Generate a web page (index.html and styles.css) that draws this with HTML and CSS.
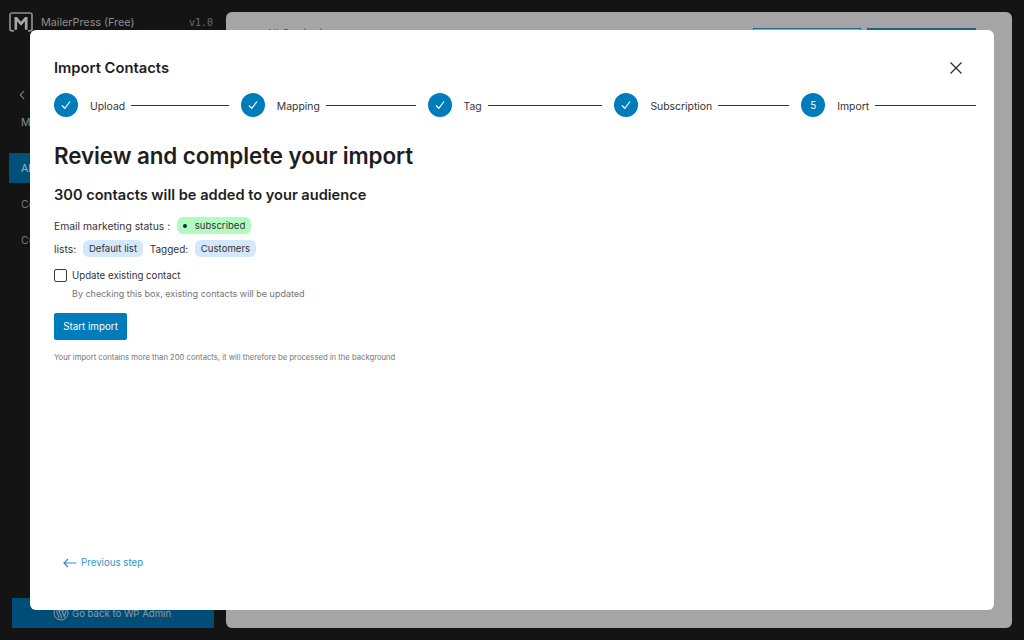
FILE: index.html
```html
<!DOCTYPE html>
<html lang="en">
<head>
<meta charset="utf-8">
<title>MailerPress - Import Contacts</title>
<link rel="stylesheet" href="styles.css">
</head>
<body>
<div class="app">
  <aside class="sidebar">
    <div class="brand">
      <svg class="brand-logo" viewBox="0 0 24 20" width="24" height="20" fill="none"><path d="M5 18.800H3a2 2 0 0 1-2-2V3a2 2 0 0 1 2-2h18a2 2 0 0 1 2 2v13.800a2 2 0 0 1-2 2h-2" stroke="#8f8f8f" stroke-width="1.700"/><path d="M5.500 17.800V5h2.500l4 4.800 4-4.800h2.500v12.800h-2.600V9.200L12 13.700 8.100 9.200v8.600z" fill="#a8a8a8"/></svg>
      <span class="brand-name">MailerPress (Free)</span>
      <span class="brand-version">v1.0</span>
    </div>
    <div class="back-row">
      <svg viewBox="0 0 10 14" width="8" height="12" fill="none"><path d="M7.500 2 3 7l4.500 5" stroke="#8a8a8a" stroke-width="1.400"/></svg>
    </div>
    <div class="side-label">Manage</div>
    <nav class="side-nav">
      <div class="side-item active">All contacts</div>
      <div class="side-item">Contacts</div>
      <div class="side-item">Custom</div>
    </nav>
    <div class="wp-link">
      <svg viewBox="0 0 24 24" width="16" height="16" fill="none"><circle cx="12" cy="12" r="10.500" stroke="#8f9aa3" stroke-width="1.500"/><path d="M5 8.500 9.500 20M9 8.500l4.500 11.500M13.500 8.500l4 10M20 8l-3.500 10M7 8.500h4.500M12.500 8.500H17" stroke="#8f9aa3" stroke-width="1.600"/></svg>
      <span>Go back to WP Admin</span>
    </div>
  </aside>
  <main class="content">
    <div class="content-bar">
      <div class="content-title">All Contacts</div>
      <div class="ghost-btn"></div>
      <div class="solid-btn"></div>
    </div>
  </main>
</div>

<section class="modal">
  <header class="modal-head">
    <h1 class="modal-title">Import Contacts</h1>
    <svg class="close" viewBox="0 0 14 14" width="14" height="14" fill="none"><path d="M1.500 1.500l11 11M12.500 1.500l-11 11" stroke="#2b2b2b" stroke-width="1.200"/></svg>
  </header>
  <ol class="steps">
    <li class="step"><span class="dot"><svg viewBox="0 0 12 12" width="12" height="12" fill="none"><path d="M2 6.500l2.800 2.800L10 2.500" stroke="#fff" stroke-width="1.200"/></svg></span><span class="step-label">Upload</span><span class="step-line"></span></li>
    <li class="step"><span class="dot"><svg viewBox="0 0 12 12" width="12" height="12" fill="none"><path d="M2 6.500l2.800 2.800L10 2.500" stroke="#fff" stroke-width="1.200"/></svg></span><span class="step-label">Mapping</span><span class="step-line"></span></li>
    <li class="step"><span class="dot"><svg viewBox="0 0 12 12" width="12" height="12" fill="none"><path d="M2 6.500l2.800 2.800L10 2.500" stroke="#fff" stroke-width="1.200"/></svg></span><span class="step-label">Tag</span><span class="step-line"></span></li>
    <li class="step"><span class="dot"><svg viewBox="0 0 12 12" width="12" height="12" fill="none"><path d="M2 6.500l2.800 2.800L10 2.500" stroke="#fff" stroke-width="1.200"/></svg></span><span class="step-label">Subscription</span><span class="step-line"></span></li>
    <li class="step"><span class="dot">5</span><span class="step-label">Import</span><span class="step-line"></span></li>
  </ol>
  <h2 class="review-title">Review and complete your import</h2>
  <h3 class="review-sub">300 contacts will be added to your audience</h3>
  <div class="meta-row status-row">
    <span>Email marketing status :</span>
    <span class="pill green"><i class="pill-dot"></i>subscribed</span>
  </div>
  <div class="meta-row lists-row">
    <span>lists:</span>
    <span class="pill blue">Default list</span>
    <span class="tagged">Tagged:</span>
    <span class="pill blue">Customers</span>
  </div>
  <label class="check-row">
    <input class="check" type="checkbox">
    <span>Update existing contact</span>
  </label>
  <p class="check-help">By checking this box, existing contacts will be updated</p>
  <button class="start" type="button">Start import</button>
  <p class="note">Your import contains more than 200 contacts, it will therefore be processed in the background</p>
  <a class="prev">
    <svg viewBox="0 0 14 10" width="14" height="10" fill="none"><path d="M13.500 5H1M5 1 1 5l4 4" stroke="#2f94cc" stroke-width="1.200"/></svg>
    <span>Previous step</span>
  </a>
</section>
</body>
</html>
```
FILE: styles.css
```css
* { box-sizing: border-box; }
html, body { margin: 0; height: 100%; }
body {
  background: #141414;
  font-family: Inter, "Liberation Sans", sans-serif;
  color: #1e1e1e;
  overflow: hidden;
}
.app {
  display: flex;
  height: 640px;
  padding: 12px 12px 12px 0;
}
.sidebar {
  width: 226px;
  flex: none;
  display: flex;
  flex-direction: column;
  color: #8a8a8a;
  font-size: 10.500px;
}
.brand {
  display: flex;
  align-items: center;
  height: 20px;
  margin-left: 9px;
  padding-right: 13px;
}
.brand-logo { flex: none; }
.brand-name { margin-left: 8px; font-size: 10.800px; color: #8e8e8e; flex: 1; }
.brand-version { font-family: "DejaVu Sans Mono", monospace; font-size: 10px; color: #6c6c6c; }
.back-row { margin: 55px 0 0 18px; height: 16px; display: flex; align-items: center; }
.side-label { margin: 13px 0 0 21px; height: 14px; line-height: 14px; }
.side-nav { margin: 23px 0 0 9px; display: flex; flex-direction: column; gap: 6px; }
.side-item { height: 30px; width: 205px; padding: 1px 0 0 12px; line-height: 30px; color: #777; }
.side-item.active { background: #00507a; color: #a8b8c2; }
.wp-link {
  margin: auto 0 0 12px;
  width: 202px;
  height: 30px;
  background: #004e77;
  color: #8f9aa3;
  display: flex;
  align-items: center;
  padding-left: 41px;
  gap: 3px;
  font-size: 9.600px;
}
.content {
  flex: 1;
  background: #a5a5a5;
  border-radius: 6px;
  padding: 16px 36px 0 40px;
}
.content-bar { display: flex; align-items: flex-start; gap: 6px; }
.content-title { flex: 1; font-size: 11px; line-height: 11px; color: #555; }
.ghost-btn { width: 108px; height: 30px; border: 1px solid #1d6a93; }
.solid-btn { width: 109px; height: 30px; background: #1d6288; }

.modal {
  position: absolute;
  left: 30px;
  top: 30px;
  width: 964px;
  height: 580px;
  background: #fff;
  border-radius: 6px;
  padding: 28px 18px 0 24px;
  display: flex;
  flex-direction: column;
  align-items: flex-start;
}
.modal-head {
  align-self: stretch;
  display: flex;
  align-items: center;
  justify-content: space-between;
  height: 20px;
  padding-right: 13px;
}
.modal-title { margin: 0; font-size: 14.750px; font-weight: 600; line-height: 20px; color: #1e1e1e; }
.steps {
  align-self: stretch;
  list-style: none;
  margin: 15px 0 0;
  padding: 0;
  display: flex;
  gap: 12px;
}
.step { flex: 1; display: flex; align-items: center; min-width: 0; }
.dot {
  flex: none;
  width: 24px;
  height: 24px;
  border-radius: 50%;
  background: #007cba;
  color: #fff;
  font-size: 10px;
  display: flex;
  align-items: center;
  justify-content: center;
}
.step-label { margin: 2px 6px 0 12px; font-size: 10.400px; color: #333; white-space: nowrap; }
.step-line { flex: 1; height: 1px; background: #333; }
.review-title { margin: 27px 0 0; font-size: 22.400px; font-weight: 600; line-height: 24px; letter-spacing: -0.080px; color: #1e1e1e; }
.review-sub { margin: 17px 0 0; font-size: 14.600px; font-weight: 600; line-height: 20px; color: #1e1e1e; }
.meta-row { display: flex; align-items: center; font-size: 10.350px; color: #333; height: 17px; }
.status-row { margin-top: 12px; gap: 6.500px; }
.lists-row { margin-top: 6px; gap: 6.700px; }
.pill { display: inline-flex; align-items: center; height: 17px; padding: 0 6px; border-radius: 6px; font-size: 9.600px; color: #333; }
.green { background: #b2fbc0; padding: 0 6px; }
.pill-dot { width: 4px; height: 4px; border-radius: 50%; background: #0b2a4d; margin: 0 8px 0 0; }
.blue { background: #d3e8fb; }
.tagged { font-size: 10px; }
.check-row { display: flex; align-items: center; gap: 5px; margin-top: 10px; height: 16px; font-size: 9.700px; color: #333; }
.check {
  appearance: none;
  margin: 0;
  width: 13px;
  height: 13px;
  border: 1px solid #3a3a3a;
  border-radius: 2px;
  background: #fff;
}
.check-help { margin: 4px 0 0 18px; font-size: 9px; line-height: 14px; color: #757575; }
.start {
  margin-top: 12px;
  width: 73px;
  height: 27px;
  background: #007cba;
  border: 0;
  border-radius: 2px;
  color: #fff;
  font: 400 9.800px Inter, "Liberation Sans", sans-serif;
}
.note { margin: 12px 0 0; font-size: 7.680px; line-height: 12px; color: #757575; }
.prev {
  margin-top: auto;
  margin-bottom: 42px;
  margin-left: 9px;
  display: flex;
  align-items: center;
  gap: 4px;
  font-size: 9.700px;
  color: #2f94cc;
}
```
